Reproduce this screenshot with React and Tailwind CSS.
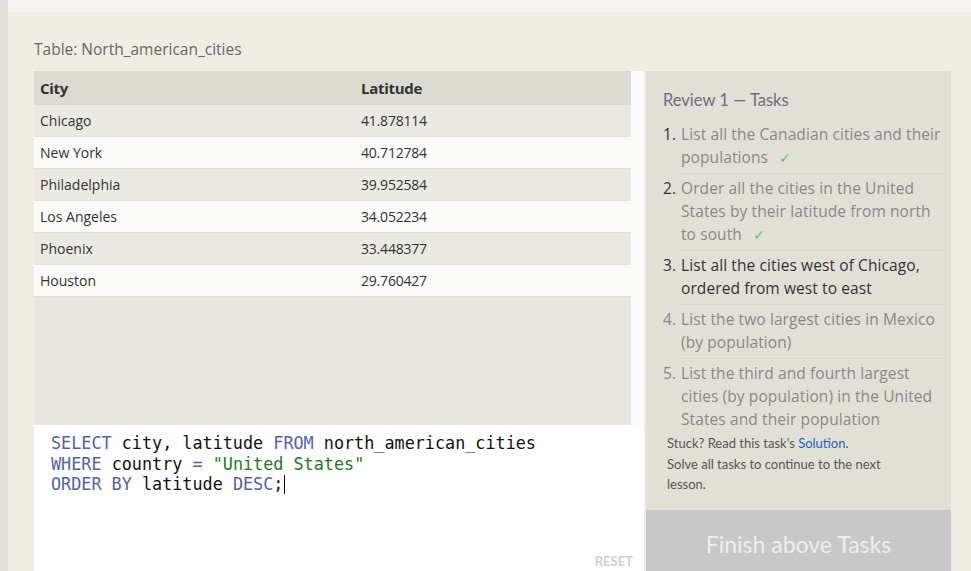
import React from 'react';

const rows = [
  ['Chicago', '41.878114'],
  ['New York', '40.712784'],
  ['Philadelphia', '39.952584'],
  ['Los Angeles', '34.052234'],
  ['Phoenix', '33.448377'],
  ['Houston', '29.760427'],
];

const tasks = [
  { n: '1.', text: 'List all the Canadian cities and their populations', done: true },
  { n: '2.', text: 'Order all the cities in the United States by their latitude from north to south', done: true },
  { n: '3.', text: 'List all the cities west of Chicago, ordered from west to east', active: true },
  { n: '4.', text: 'List the two largest cities in Mexico (by population)' },
  { n: '5.', text: 'List the third and fourth largest cities (by population) in the United States and their population' },
];

const App = () => {
  return (
    <div className="flex h-[571px] w-[971px] overflow-hidden bg-[#f0eee4] font-['Open_Sans',sans-serif]">
      <div className="w-[8px] shrink-0 bg-[#e3e0dc]" />
      <div className="flex flex-1 flex-col">
        <div className="h-[12px] shrink-0 bg-[#f5f4f0]" />
        <div className="pl-[26px] pt-[28px] text-[15.5px] leading-[18px] text-[#666]">Table: North_american_cities</div>
        <div className="mt-[13px] flex gap-[2px] pl-[26px]">
          {/* left: results + editor */}
          <div className="flex w-[610px] flex-col">
            <div className="flex h-[354px]">
              <div className="w-[597px] bg-[#e9e8e0]">
                <div className="flex h-[34px] items-center bg-[#dcdbd1] text-[15px] font-bold tracking-[-0.3px] text-[#333]">
                  <div className="w-[327px] pl-[6px]">City</div>
                  <div>Latitude</div>
                </div>
                {rows.map(([city, lat], i) => (
                  <div
                    key={city}
                    className={`flex h-[32px] items-center border-b border-[#e2e1d8] text-[14px] text-[#333] ${
                      i % 2 === 0 ? 'bg-[#eaeae2]' : 'bg-[#fafaf8]'
                    }`}
                  >
                    <div className="w-[327px] pl-[6px]">{city}</div>
                    <div className="tracking-[-0.2px]">{lat}</div>
                  </div>
                ))}
              </div>
              <div className="w-[13px] bg-[#fbfbfa]" />
            </div>
            <div className="relative h-[150px] bg-white pl-[17px] pt-[8px] font-['DejaVu_Sans_Mono',monospace] text-[16.8px] leading-[20.5px] text-[#111]">
              <div>
                <span className="text-[#4f63a6]">SELECT</span> city, latitude <span className="text-[#4f63a6]">FROM</span> north_american_cities
              </div>
              <div>
                <span className="text-[#4f63a6]">WHERE</span> country <span className="text-[#4f63a6]">=</span>{' '}
                <span className="text-[#1d7a1d]">"United States"</span>
              </div>
              <div className="flex items-center">
                <span className="whitespace-pre">
                  <span className="text-[#4f63a6]">ORDER BY</span> latitude <span className="text-[#4f63a6]">DESC</span>;
                </span>
                <span className="ml-[1px] inline-block h-[19px] w-[1px] bg-black" />
              </div>
              <div className="absolute right-[11px] top-[126px] font-['Lato',sans-serif] text-[13px] font-bold text-[#cfcfcf]">RESET</div>
            </div>
          </div>
          {/* right: tasks */}
          <div className="flex w-[305px] flex-col">
            <div className="h-[439px] bg-[#e2e0d6] pl-[17px] pr-[8px] pt-[19px]">
              <div className="font-['Lato',sans-serif] text-[16.5px] leading-[20px] text-[#6a6e7e]">Review 1 — Tasks</div>
              <ol className="mt-[13px] text-[15.5px] leading-[23px] tracking-[0.1px]">
                {tasks.map((t, i) => (
                  <li key={t.n} className="flex">
                    <span className={`w-[18px] shrink-0 ${t.done || t.active ? 'text-[#333]' : 'text-[#888]'}`}>{t.n}</span>
                    <div
                      className={`flex-1 ${i < tasks.length - 1 ? 'mb-[3px] border-b border-[#d8d6cb] pb-[4px]' : ''} ${
                        t.active ? 'text-[#333]' : 'text-[#888]'
                      }`}
                    >
                      {t.text}
                      {t.done && <span className="ml-[11px] inline-block text-[14px] text-[#5cc36a]">✓</span>}
                    </div>
                  </li>
                ))}
              </ol>
              <div className="mt-[2px] w-[240px] pl-[4px] font-['Lato',sans-serif] text-[13px] leading-[20.5px] text-[#555]">
                <div>
                  Stuck? Read this task's <span className="text-[#1a5fc9]">Solution</span>.
                </div>
                <div>Solve all tasks to continue to the next lesson.</div>
              </div>
            </div>
            <div className="flex h-[70px] items-start justify-center bg-[#c8c8c8] pt-[20px] font-['Lato',sans-serif] text-[23px] leading-[28px] text-[#eeeeee]">
              Finish above Tasks
            </div>
          </div>
        </div>
      </div>
    </div>
  );
};

export default App;
